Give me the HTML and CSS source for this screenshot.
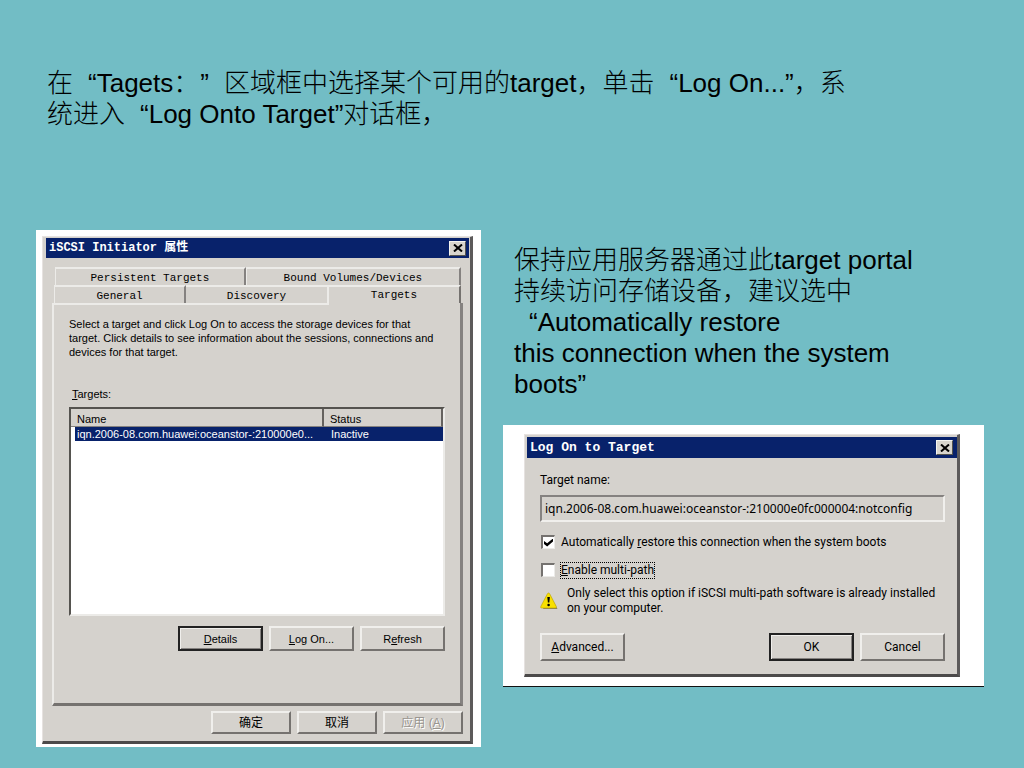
FILE: index.html
```html
<!DOCTYPE html>
<html lang="zh-CN">

<head>
    <meta charset="UTF-8">
    <meta name="viewport" content="width=device-width, initial-scale=1.0">
    <title>iSCSI Initiator</title>
    <link rel="stylesheet" href="styles.css">
</head>

<body>
    <main class="slide">
        <p class="slide-text intro">在<span class="quote-open">“</span>Tagets：<span class="quote-close">”</span>区域框中选择某个可用的target，单击<span class="quote-open">“</span>Log On...”，系<br>统进入<span class="quote-open">“</span>Log Onto Target”对话框，</p>

        <div class="columns">
            <div class="shot shot-initiator">
                <section class="window initiator">
                    <header class="title-bar">
                        <h2>iSCSI Initiator 属性</h2>
                        <button class="close" aria-label="Close">
                            <svg viewBox="0 0 10 8" width="10" height="8"><path d="M1 0.5 L9 7.5 M9 0.5 L1 7.5" stroke="#000" stroke-width="2" /></svg>
                        </button>
                    </header>

                    <div class="tabs tabs-back">
                        <button class="tab">Persistent Targets</button>
                        <button class="tab">Bound Volumes/Devices</button>
                    </div>
                    <div class="tabs tabs-front">
                        <button class="tab">General</button>
                        <button class="tab">Discovery</button>
                        <button class="tab tab-active">Targets</button>
                    </div>

                    <div class="tab-panel">
                        <p class="help">Select a target and click Log On to access the storage devices for that<br>target. Click details to see information about the sessions, connections and<br>devices for that target.</p>
                        <p class="list-label"><u>T</u>argets:</p>
                        <div class="list">
                            <table>
                                <thead>
                                    <tr>
                                        <th class="col-name">Name</th>
                                        <th>Status</th>
                                    </tr>
                                </thead>
                                <tbody>
                                    <tr>
                                        <td>iqn.2006-08.com.huawei:oceanstor-:210000e0...</td>
                                        <td>Inactive</td>
                                    </tr>
                                </tbody>
                            </table>
                        </div>
                        <div class="buttons list-buttons">
                            <button class="btn btn-default"><span><u>D</u>etails</span></button>
                            <button class="btn"><span><u>L</u>og On...</span></button>
                            <button class="btn"><span>R<u>e</u>fresh</span></button>
                        </div>
                    </div>

                    <div class="buttons footer-buttons">
                        <button class="btn">确定</button>
                        <button class="btn">取消</button>
                        <button class="btn" disabled><span>应用 (<u>A</u>)</span></button>
                    </div>
                </section>
            </div>

            <div class="side">
                <p class="slide-text note">保持应用服务器通过此target portal<br>持续访问存储设备，建议选中<br><span class="quote-open">“</span>Automatically restore<br>this connection when the system<br>boots”</p>

                <div class="shot shot-logon">
                    <section class="window logon">
                        <header class="title-bar">
                            <h2>Log On to Target</h2>
                            <button class="close" aria-label="Close">
                                <svg viewBox="0 0 10 8" width="10" height="8"><path d="M1 0.5 L9 7.5 M9 0.5 L1 7.5" stroke="#000" stroke-width="2" /></svg>
                            </button>
                        </header>
                        <div class="logon-body">
                            <label class="field-label" for="target-name">Target name:</label>
                            <input class="field" id="target-name" type="text" readonly value="iqn.2006-08.com.huawei:oceanstor-:210000e0fc000004:notconfig">
                            <div class="check-row">
                                <input type="checkbox" id="restore" checked>
                                <label for="restore">Automatically <u>r</u>estore this connection when the system boots</label>
                            </div>
                            <div class="check-row">
                                <input type="checkbox" id="multipath">
                                <label class="focused" for="multipath"><u>E</u>nable multi-path</label>
                            </div>
                            <div class="warning">
                                <svg viewBox="0 0 18 18" width="18" height="18">
                                    <path d="M9.5 2.5 L17.5 17 H3 Z" fill="#8a8460" />
                                    <path d="M8.5 1 Q9.3 1 9.8 2 L16.3 14.5 Q16.8 16 15.5 16 H1.5 Q0.3 16 0.8 14.5 L7.3 2 Q7.8 1 8.5 1 Z" fill="#f8e000" stroke="#b8a000" stroke-width="0.6" />
                                    <path d="M7.3 5 H9.9 L9.3 10.6 H7.9 Z" fill="#000" />
                                    <circle cx="8.6" cy="13" r="1.3" fill="#000" />
                                </svg>
                                <p>Only select this option if iSCSI multi-path software is already installed<br>on your computer.</p>
                            </div>
                            <div class="buttons logon-buttons">
                                <button class="btn btn-left"><span><u>A</u>dvanced...</span></button>
                                <button class="btn btn-default">OK</button>
                                <button class="btn">Cancel</button>
                            </div>
                        </div>
                    </section>
                </div>
            </div>
        </div>
    </main>
</body>

</html>
```

FILE: styles.css
```css
* {
    box-sizing: border-box;
}

body {
    margin: 0;
    background-color: #72bdc5;
    color: #000;
    font-family: "Liberation Sans", "Noto Sans CJK SC", sans-serif;
    text-spacing-trim: space-all;
}

p, h2 {
    margin: 0;
}

button {
    font: inherit;
    color: inherit;
    padding: 0;
}

.slide {
    padding: 68px 40px 21px 36px;
}

/* slide text */
.slide-text {
    font-size: 26px;
    line-height: 31px;
    font-weight: 300;
    white-space: nowrap;
}

/* quotes take a full character cell */
.quote-open {
    padding-left: 15px;
}

.quote-close {
    padding-left: 1px;
    padding-right: 15px;
}

.intro {
    padding-left: 11px;
    margin-bottom: 100px;
}

.note {
    padding-left: 11px;
    margin: 15px 0 25px;
}

.columns {
    display: grid;
    grid-template-columns: 445fr 481fr;
    gap: 22px;
    align-items: start;
}

.shot {
    background-color: #fff;
}

.shot-initiator {
    padding: 6px 8px 3px 6px;
}

.shot-logon {
    padding: 9px 24px 9px 21px;
    border-bottom: 1px solid #111;
}

/* windows */
.window {
    background-color: #d5d2cd;
    border: 1px solid #e6e2e0;
    border-right: 3px solid #5c5a5a;
    border-bottom: 3px solid #4c4a4a;
    font-size: 11px;
}

.title-bar {
    display: flex;
    align-items: center;
    justify-content: space-between;
    height: 20px;
    background-color: #08226b;
    color: #fff;
}

.title-bar h2 {
    font-family: "Liberation Mono", "Noto Sans CJK SC", monospace;
    font-size: 12px;
    line-height: 16px;
    font-weight: bold;
}

.close {
    display: flex;
    align-items: center;
    justify-content: center;
    width: 17px;
    height: 15px;
    background-color: #d8d5cd;
    border: 1px solid #f4f4f0;
    border-right-color: #55544f;
    border-bottom-color: #55544f;
}

.initiator {
    padding: 1px 1px 7px 3px;
}

.initiator .title-bar {
    padding: 0 3px;
}

/* tabs */
.tabs {
    display: flex;
    font-family: "Liberation Mono", monospace;
    margin-right: 8px;
}

.tabs-back {
    margin-top: 9px;
    margin-left: 9px;
}

.tabs-front {
    margin-left: 8px;
}

.tab {
    flex: 145;
    height: 18px;
    line-height: 18px;
    background: none;
    border: none;
    border-top: 2px solid #ecebe8;
    border-right: 2px solid #858280;
}

.tabs-back .tab {
    flex: 1;
    border-left: 1px solid #ecebe8;
}

.tabs-back .tab:first-child {
    flex: 0 0 47%;
}

.tabs-front .tab:first-child {
    flex: 133;
    border-left: 1px solid #ecebe8;
}

.tabs-front .tab-active {
    flex: 134;
    line-height: 14px;
    border-right-color: #75726f;
}

.tab:nth-child(2) {
    border-right-color: #ecebe8;
}

.tabs-back .tab:nth-child(2) {
    border-right-color: #858280;
}

.tab-panel {
    margin: 0 6px;
    padding: 14px 15px 52px;
    border-left: 2px solid #ecebe8;
    border-right: 3px solid #858280;
    border-bottom: 3px solid #75726f;
    background: linear-gradient(#ecebe8, #ecebe8) no-repeat left top / 275px 2px;
}

.help {
    line-height: 14px;
    white-space: nowrap;
}

.list-label {
    margin: 28px 3px 6px;
    line-height: 14px;
}

.list {
    height: 209px;
    background-color: #fff;
    border: 2px solid #55534f;
    border-right: 2px solid #ecebe8;
    border-bottom: 2px solid #ecebe8;
}

.list table {
    width: 100%;
    table-layout: fixed;
    border-spacing: 0;
    line-height: 14px;
    white-space: nowrap;
}

.list th {
    height: 18px;
    padding: 2px 6px 0;
    font-weight: normal;
    text-align: left;
    background-color: #d5d2cd;
    border-right: 2px solid #65625f;
    border-bottom: 1px solid #858280;
}

.col-name {
    width: 68%;
}

.list td {
    padding: 0 7px;
    color: #fff;
    background-color: #08226b;
}

.list td:first-child {
    padding: 0 2px;
    border-left: 4px solid #fff;
}

/* buttons */
.buttons {
    display: flex;
    justify-content: flex-end;
    gap: 6px;
}

.btn {
    width: 85px;
    height: 25px;
    background-color: #d5d2cd;
    border: 2px solid #f0efec;
    border-right-color: #75726f;
    border-bottom-color: #75726f;
}

.btn-default {
    border: 2px solid #222;
    box-shadow: inset 1px 1px #f0efec, inset -1px -1px #858280;
}

.btn:disabled {
    color: #99958f;
    text-shadow: 1px 1px #fff;
}

.list-buttons {
    margin-top: 10px;
}

.footer-buttons {
    margin: 5px 6px 0;
}

.footer-buttons .btn {
    width: 80px;
    height: 23px;
    font-size: 12px;
    line-height: 16px;
}

/* log on dialog */
.logon {
    padding: 2px 0 13px 2px;
    font-family: Roboto, sans-serif;
    font-size: 12px;
}

.logon .title-bar {
    height: 21px;
    padding: 0 4px 0 3px;
}

.logon .title-bar h2 {
    font-size: 13px;
}

.logon-body {
    padding: 15px 12px 0 13px;
}

.field-label {
    display: block;
    line-height: 15px;
}

.field {
    display: block;
    width: 100%;
    height: 27px;
    margin: 7px 0 12px;
    padding: 0 3px;
    font-family: "Noto Sans", sans-serif;
    font-size: 12px;
    color: inherit;
    background-color: #d5d2cd;
    border: 2px solid #858280;
    border-right-color: #f0efec;
    border-bottom-color: #f0efec;
}

.check-row {
    display: flex;
    align-items: center;
    gap: 6px;
    height: 16px;
    margin-bottom: 8px;
    line-height: 15px;
}

.check-row + .check-row {
    margin-top: 12px;
}

.check-row input {
    appearance: none;
    display: flex;
    align-items: center;
    justify-content: center;
    width: 14px;
    height: 14px;
    margin: 0 0 0 1px;
    background-color: #fff;
    border: 2px solid #75726f;
    border-right: 1px solid #ecebe8;
    border-bottom: 1px solid #ecebe8;
}

.check-row input:checked::before {
    content: "";
    width: 9px;
    height: 8px;
    background-color: #000;
    clip-path: polygon(0 30%, 35% 60%, 100% 0, 100% 38%, 35% 100%, 0 70%);
}

.focused {
    outline: 1px dotted #000;
}

.warning {
    display: flex;
    align-items: center;
    gap: 9px;
    line-height: 15px;
    white-space: nowrap;
}

.logon-buttons {
    margin-top: 17px;
}

.logon-buttons .btn {
    height: 28px;
}

.logon-buttons .btn-left {
    margin-right: auto;
}
```
